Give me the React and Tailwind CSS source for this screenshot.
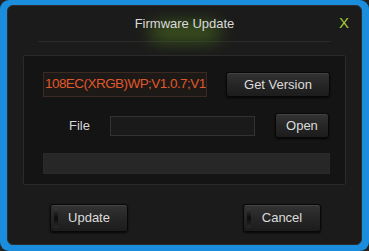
const Btn = ({ children, className = "", bar = false }) => (
    <button
        type="button"
        className={`relative flex shrink-0 items-center justify-center rounded-[3px] border border-[#080808] bg-gradient-to-b from-[#333333] via-[#262626] to-[#1c1c1c] text-[#dcdcdc] shadow-[0_1px_2px_rgba(0,0,0,0.8),inset_0_1px_0_rgba(255,255,255,0.08)] ${className}`}
    >
        {bar && (
            <span className="absolute left-[3px] top-[3px] bottom-[3px] w-[4px] rounded-[2px] bg-gradient-to-b from-[#3a3a3a] via-[#0c0c0c] to-[#2a2a2a]" />
        )}
        {children}
    </button>
);

export default function App() {
    return (
        <div
            className="w-[369px] h-[251px] bg-[#222] overflow-hidden"
            style={{ fontFamily: '"Liberation Sans", Arial, sans-serif' }}
        >
            <div className="w-full h-full rounded-[9px] bg-[#1a8ddc] pt-[5px] pb-[6px] px-[7px]">
                <div className="flex h-full flex-col rounded-[6px] border border-[#2c2c2c] bg-[#1b1b1b]">
                    {/* title bar */}
                    <div className="relative flex h-[35px] items-center justify-center">
                        <div className="absolute left-1/2 top-[18px] h-[16px] w-[70px] -translate-x-1/2 rounded-full bg-[#5d8f1e] opacity-60 blur-[9px]" />
                        <span className="relative text-[13px] text-[#dadada]">Firmware Update</span>
                        <span className="absolute right-[12px] top-[6px] text-[15px] text-[#a6c835]">X</span>
                    </div>
                    <div className="mx-[30px] h-px bg-[#2a2a2a]" />

                    {/* inner box */}
                    <div className="mx-[15px] mt-[13px] flex h-[130px] flex-col rounded-[2px] border border-[#2a2a2a] bg-[#141414] pl-[19px] pr-[16px] pt-[16px]">
                        <div className="flex items-center">
                            <div className="flex h-[25px] w-[164px] shrink-0 items-center overflow-hidden whitespace-nowrap border border-[#3a2a22] bg-[#1d1917] pl-[1px] text-[13.5px] tracking-[-0.55px] text-[#e0582a]">
                                108EC(XRGB)WP;V1.0.7;V1
                            </div>
                            <Btn className="ml-[19px] h-[25px] w-[104px] text-[13px]">Get Version</Btn>
                        </div>
                        <div className="mt-[16px] flex items-center">
                            <span className="ml-[26px] text-[13px] text-[#d6d6d6]">File</span>
                            <div className="ml-[20px] h-[20px] w-[145px] border border-[#333] bg-[#1a1a1a]" />
                            <Btn className="ml-[20px] h-[25px] w-[54px] text-[13px]">Open</Btn>
                        </div>
                        <div className="mt-[15px] h-[21px] w-[287px] border border-[#2a2a2a] bg-[#272727]" />
                    </div>

                    {/* footer */}
                    <div className="mt-[19px] flex pl-[42px] pr-[40px]">
                        <Btn bar className="h-[28px] w-[78px] text-[13px]">Update</Btn>
                        <Btn bar className="ml-auto h-[28px] w-[78px] text-[13px]">Cancel</Btn>
                    </div>
                </div>
            </div>
        </div>
    );
}
